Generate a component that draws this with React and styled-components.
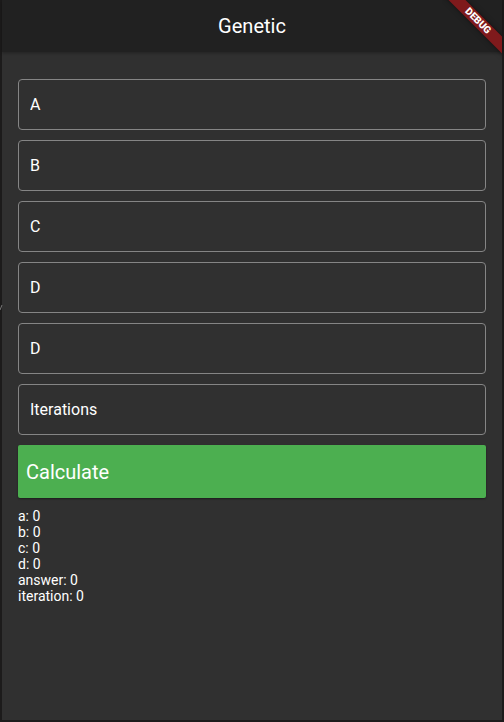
import React, { useState } from "react";
import styled, { createGlobalStyle } from "styled-components";

const GlobalStyle = createGlobalStyle`
  *, *::before, *::after { box-sizing: border-box; }
  body {
    margin: 0;
    background: #1c1b1b;
    color: #fff;
    font-family: Roboto, "Liberation Sans", sans-serif;
  }
`;

const Frame = styled.div`
  position: relative;
  display: flex;
  flex-direction: column;
  min-height: 100vh;
  background: #303030;
  border: 2px solid #1c1b1b;
  border-top: 0;
`;

const AppBar = styled.header`
  display: flex;
  align-items: center;
  justify-content: center;
  height: 52px;
  background: #212121;
  box-shadow: 0 1px 3px rgba(0, 0, 0, 0.3);
`;

const Title = styled.h1`
  margin: 0;
  font-size: 20px;
  font-weight: 400;
  line-height: 24px;
`;

const BannerCorner = styled.div`
  position: absolute;
  top: 0;
  right: 0;
  width: 60px;
  height: 60px;
  overflow: hidden;
  pointer-events: none;
`;

const Banner = styled.span`
  position: absolute;
  top: 15px;
  right: -36px;
  width: 120px;
  height: 12px;
  background: #7f1a1c;
  box-shadow: 0 0 5px rgba(0, 0, 0, 0.5);
  font-size: 10px;
  font-weight: 900;
  line-height: 12px;
  text-align: center;
  transform: rotate(45deg);
`;

const EdgeMark = styled.svg`
  position: absolute;
  top: 304px;
  left: -2px;
  width: 3px;
  height: 8px;
`;

const Form = styled.form`
  display: flex;
  flex-direction: column;
  gap: 10px;
  padding: 27px 16px 10px;
`;

const Field = styled.input`
  width: 100%;
  height: 51px;
  padding: 0 11px;
  border: 1px solid #858585;
  border-radius: 4px;
  background: transparent;
  color: #fff;
  font: 400 16px/20px Roboto, "Liberation Sans", sans-serif;
  outline: none;

  &::placeholder { color: #fff; opacity: 1; }
  &:focus { border-color: #4caf50; }
`;

const CalculateButton = styled.button`
  height: 53px;
  padding: 0 8px;
  border: 0;
  border-radius: 2px;
  background: #4caf50;
  box-shadow: 0 1px 2px rgba(0, 0, 0, 0.4);
  color: #fff;
  font: 400 20px/24px Roboto, "Liberation Sans", sans-serif;
  text-align: left;
  cursor: pointer;
`;

const Results = styled.section`
  padding: 0 16px;
  font-size: 14px;
  line-height: 16px;
`;

const ResultLine = styled.p`
  margin: 0;
`;

const fields = [
  { id: "a", label: "A" },
  { id: "b", label: "B" },
  { id: "c", label: "C" },
  { id: "d", label: "D" },
  { id: "target", label: "D" },
  { id: "iterations", label: "Iterations" },
];

const results = [
  ["a", 0],
  ["b", 0],
  ["c", 0],
  ["d", 0],
  ["answer", 0],
  ["iteration", 0],
];

export default function App() {
  const [values, setValues] = useState({});

  return (
    <>
      <GlobalStyle />
      <Frame>
        <AppBar>
          <Title>Genetic</Title>
        </AppBar>
        <Form onSubmit={(event) => event.preventDefault()}>
          {fields.map(({ id, label }) => (
            <Field
              key={id}
              id={id}
              type="text"
              aria-label={label}
              placeholder={label}
              value={values[id] || ""}
              onChange={(event) => setValues({ ...values, [id]: event.target.value })}
            />
          ))}
          <CalculateButton type="submit">Calculate</CalculateButton>
        </Form>
        <Results>
          {results.map(([name, value]) => (
            <ResultLine key={name}>{`${name}: ${value}`}</ResultLine>
          ))}
        </Results>
        <EdgeMark viewBox="0 0 3 8" aria-hidden="true">
          <path d="M0 6L2 1" stroke="#777" strokeWidth="1" fill="none" />
        </EdgeMark>
        <BannerCorner>
          <Banner>DEBUG</Banner>
        </BannerCorner>
      </Frame>
    </>
  );
}
